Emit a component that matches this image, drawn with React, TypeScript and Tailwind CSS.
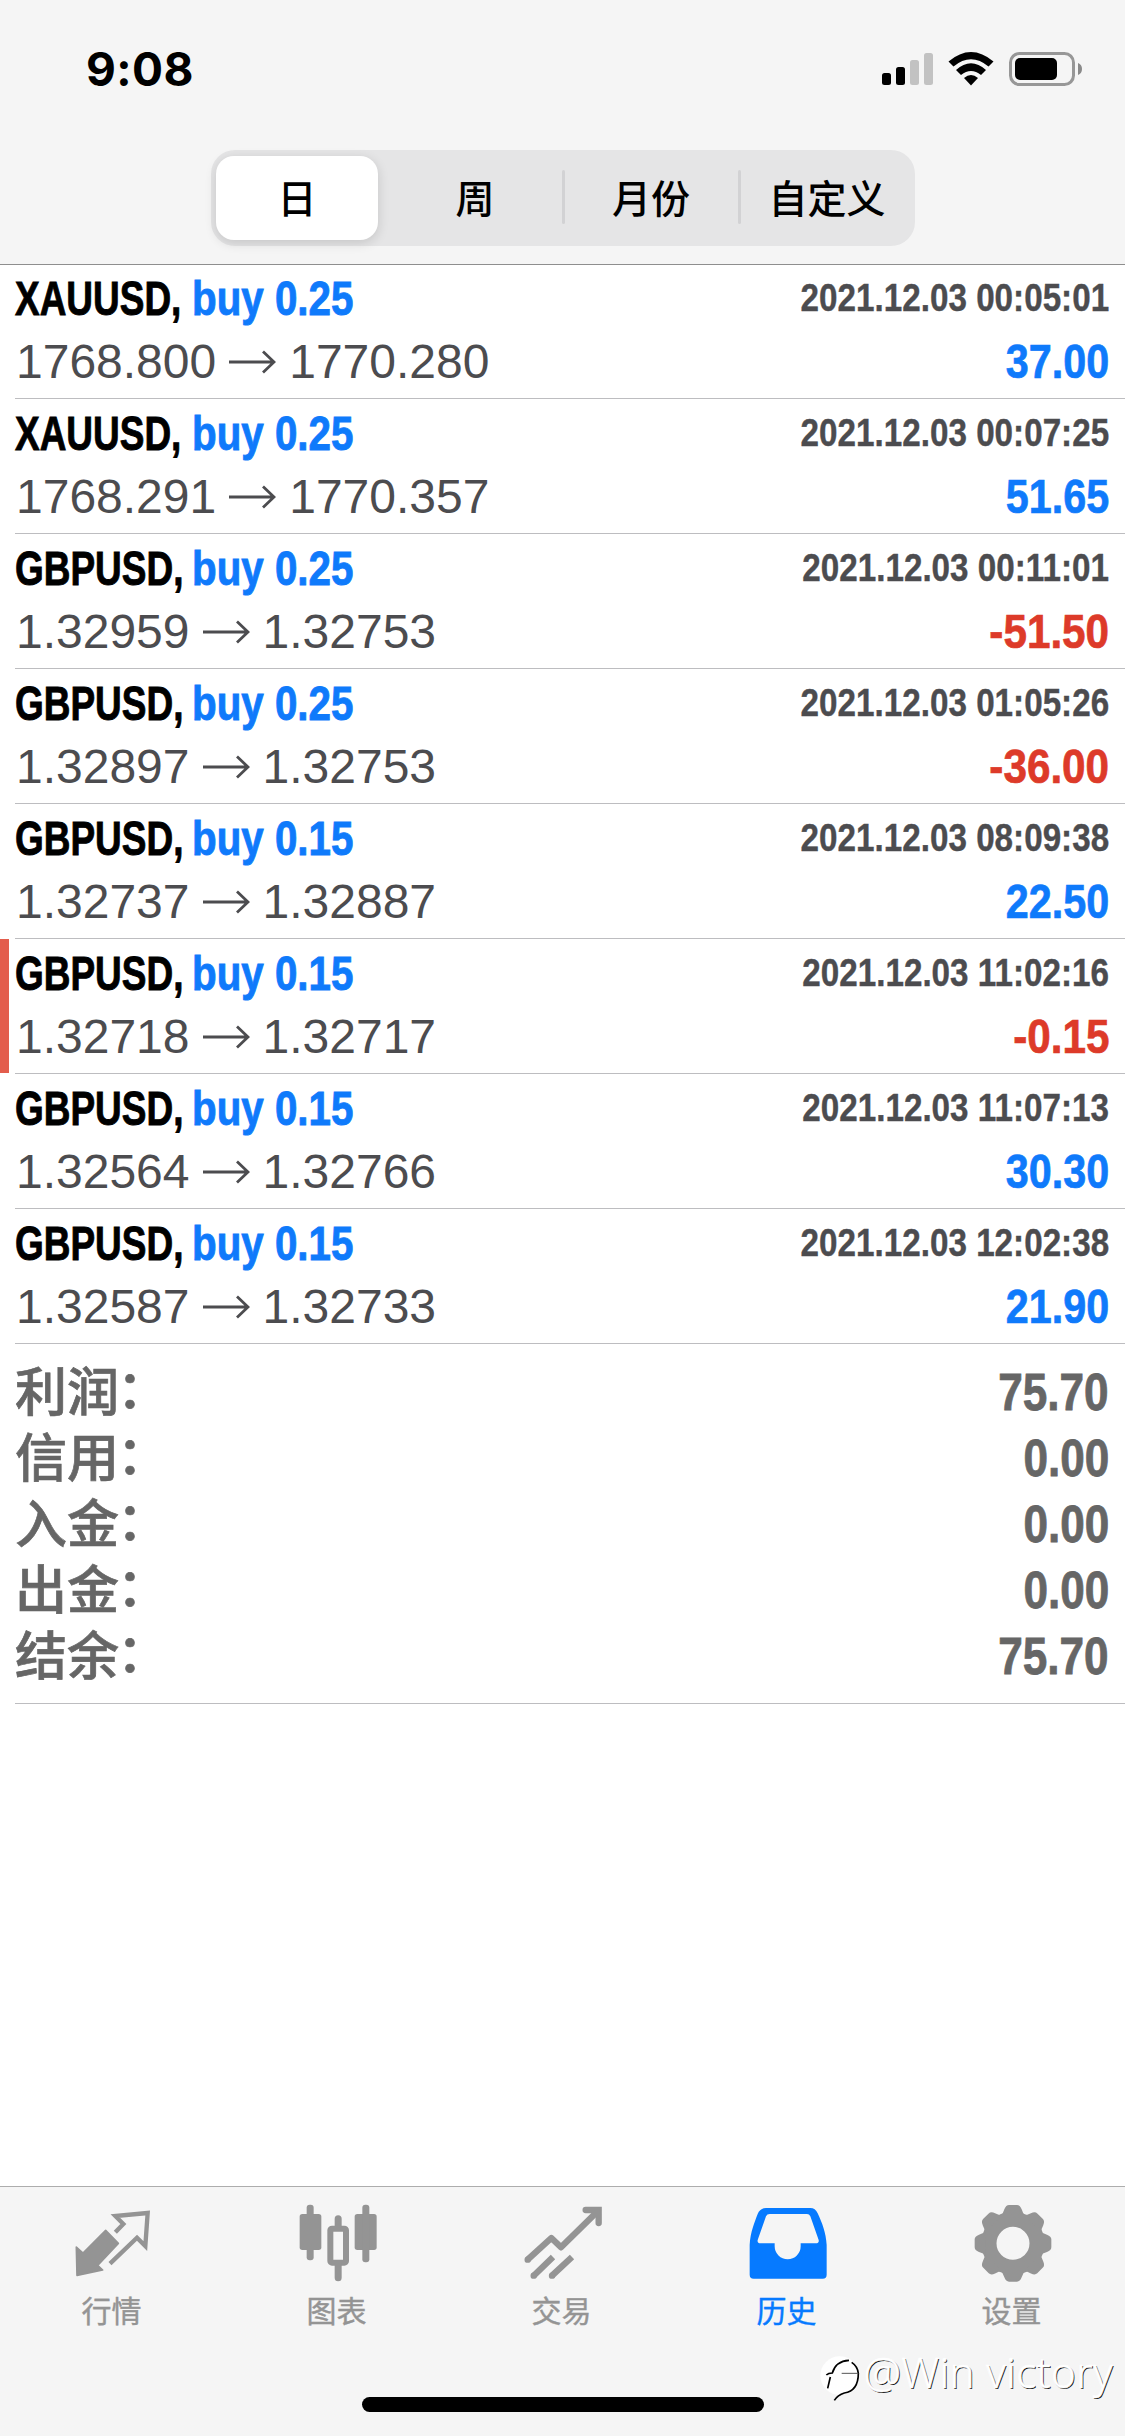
import type { ReactNode } from "react";

type Deal = {
  symbol: string;
  volume: string;
  open: string;
  close: string;
  time: string;
  profit: string;
  marked?: boolean;
};

const DEALS: Deal[] = [
  { symbol: "XAUUSD", volume: "0.25", open: "1768.800", close: "1770.280", time: "2021.12.03 00:05:01", profit: "37.00" },
  { symbol: "XAUUSD", volume: "0.25", open: "1768.291", close: "1770.357", time: "2021.12.03 00:07:25", profit: "51.65" },
  { symbol: "GBPUSD", volume: "0.25", open: "1.32959", close: "1.32753", time: "2021.12.03 00:11:01", profit: "-51.50" },
  { symbol: "GBPUSD", volume: "0.25", open: "1.32897", close: "1.32753", time: "2021.12.03 01:05:26", profit: "-36.00" },
  { symbol: "GBPUSD", volume: "0.15", open: "1.32737", close: "1.32887", time: "2021.12.03 08:09:38", profit: "22.50" },
  { symbol: "GBPUSD", volume: "0.15", open: "1.32718", close: "1.32717", time: "2021.12.03 11:02:16", profit: "-0.15", marked: true },
  { symbol: "GBPUSD", volume: "0.15", open: "1.32564", close: "1.32766", time: "2021.12.03 11:07:13", profit: "30.30" },
  { symbol: "GBPUSD", volume: "0.15", open: "1.32587", close: "1.32733", time: "2021.12.03 12:02:38", profit: "21.90" },
];

const SUMMARY = [
  { label: "利润", value: "75.70" },
  { label: "信用", value: "0.00" },
  { label: "入金", value: "0.00" },
  { label: "出金", value: "0.00" },
  { label: "结余", value: "75.70" },
];

const PERIODS = ["日", "周", "月份", "自定义"];

function StatusBar() {
  return (
    <div className="flex h-[150px] items-start justify-between pt-[40px] pr-[43px] pl-[86px]">
      <span className="font-['Inter',sans-serif] text-[46px] leading-[58px] font-bold tracking-[0.4px] text-black">9:08</span>
      <svg className="mt-[8px]" width="204" height="44" viewBox="878 48 204 44">
        <rect x="882" y="73" width="9" height="12" rx="2.5" />
        <rect x="896" y="67" width="9" height="18" rx="2.5" />
        <rect x="910" y="60" width="9" height="25" rx="2.5" fill="#c2c2c2" />
        <rect x="924" y="53" width="9" height="32" rx="2.5" fill="#c2c2c2" />
        <path d="M948.5 61.5Q971 42.500 993.500 61.500L988.500 66.500Q971 52 953.500 66.500Z" />
        <path d="M956 70Q971 56.500 986 70L981 75Q971 67 961 75Z" />
        <path d="M964 78Q971 72 978 78L971 85.500Z" />
        <rect x="1010.500" y="53.500" width="63" height="31" rx="9" fill="none" stroke="#979797" strokeWidth="3" />
        <rect x="1015" y="58" width="42" height="22" rx="5" />
        <path d="M1078 63Q1082 64.500 1082 69T1078 75Z" fill="#8a8a8a" />
      </svg>
    </div>
  );
}

function PeriodPicker() {
  return (
    <div className="mr-[210px] ml-[211px] grid h-[96px] grid-cols-4 items-center rounded-[24px] bg-[#e5e5e6]">
      {PERIODS.map((period, i) => (
        <div key={period} className="relative flex h-full items-center justify-center">
          {i > 1 && <span className="absolute top-[20px] -left-px h-[54px] w-[3px] rounded-full bg-[#d2d2d4]" />}
          <span
            className={
              i === 0
                ? "mr-[4px] flex h-[84px] w-[162px] items-center justify-center rounded-[18px] bg-white pb-[3px] text-[39px] leading-none font-medium shadow-[0_3px_12px_rgba(0,0,0,0.14)]"
                : "pb-[3px] text-[39px] leading-none font-medium"
            }
          >
            {period}
          </span>
        </div>
      ))}
    </div>
  );
}

function DealRow({ deal }: { deal: Deal }) {
  return (
    <li className="relative h-[135px] pl-[15px]">
      {deal.marked && <span className="absolute top-0 left-0 h-[134px] w-[9px] bg-[#e35d4d]" />}
      <div className="h-full border-b border-[#bdbdc0] pt-[10px] pr-[16px] font-['Liberation_Sans',sans-serif] whitespace-nowrap">
        <div className="flex h-[63px] justify-between">
          <div className="flex text-[48px] leading-[49px] font-bold [-webkit-text-stroke:0.9px_currentColor]">
            <span className="w-[177px]">
              <span className="inline-block origin-left scale-x-[0.77] text-black">{deal.symbol},</span>
            </span>
            <span className="inline-block origin-left scale-x-[0.84] text-[#0f7afb]">buy {deal.volume}</span>
          </div>
          <span className="mt-[3px] inline-block origin-right scale-x-[0.852] text-[39px] leading-[41px] font-bold text-[#4c4c4f] [-webkit-text-stroke:0.4px_currentColor]">
            {deal.time}
          </span>
        </div>
        <div className="flex justify-between text-[48px] leading-[49px]">
          <div className="flex items-center gap-[13px] pl-px text-[#4c4c4f]">
            <span>{deal.open}</span>
            <svg width="47" height="24" viewBox="0 0 47 24" fill="none" stroke="currentColor" strokeWidth="2.8">
              <path d="M0 12H45M34 1.500L45 12L34 22.500" />
            </svg>
            <span>{deal.close}</span>
          </div>
          <span
            className={`inline-block origin-right font-bold [-webkit-text-stroke:0.7px_currentColor] ${
              deal.profit.startsWith("-") ? "scale-x-[0.88] text-[#dd3a29]" : "scale-x-[0.86] text-[#0f7afb]"
            }`}
          >
            {deal.profit}
          </span>
        </div>
      </div>
    </li>
  );
}

function Summary() {
  return (
    <div className="ml-[15px] h-[360px] border-b border-[#bdbdc0] pt-[15px] pr-[16px] text-[#666666]">
      {SUMMARY.map((row) => (
        <div key={row.label} className="flex h-[66px] justify-between">
          <span className="text-[52px] leading-[60px] font-medium [-webkit-text-stroke:0.7px_currentColor]">
            {row.label}
            <span className="-ml-[15px] font-['Noto_Sans_CJK_JP',sans-serif]" lang="ja">
              ：
            </span>
          </span>
          <span className="inline-block origin-right scale-x-[0.865] pt-px font-['Liberation_Sans',sans-serif] text-[51px] leading-[66px] font-bold [-webkit-text-stroke:0.8px_currentColor]">
            {row.value}
          </span>
        </div>
      ))}
    </div>
  );
}

const QuotesIcon = () => (
  <svg width="80" height="80" viewBox="0 0 240 240">
    <path
      d="M10 135L30 153L98 85L136 124L74 190L89 204L12 220Z"
      fill="currentColor"
      stroke="currentColor"
      strokeWidth="5"
      strokeLinejoin="round"
    />
    <path d="M127 91L151 66L127 42L224 33L217 132L192 107L111 185" fill="none" stroke="currentColor" strokeWidth="13" />
  </svg>
);

const ChartIcon = () => (
  <svg width="80" height="80" viewBox="0 0 240 240" fill="currentColor">
    <rect x="5" y="36" width="65" height="108" rx="8" />
    <rect x="26" y="8" width="21" height="167" rx="9" />
    <rect x="97" y="80" width="47" height="102" rx="5" fill="none" stroke="currentColor" strokeWidth="18" />
    <path d="M110 80V50a10.500 10.500 0 0 1 21 0V80ZM110 185V227a10.500 10.500 0 0 0 21 0V185Z" />
    <rect x="170" y="36" width="66" height="108" rx="8" />
    <rect x="193" y="8" width="21" height="173" rx="9" />
  </svg>
);

const TradeIcon = () => (
  <svg width="80" height="80" viewBox="0 0 240 240" fill="none" stroke="currentColor" strokeWidth="19">
    <path d="M14 173L85 108L114 136L224 28M32 221L90 165M87 221L147 165" strokeLinejoin="round" />
    <path d="M188 24H227V63" strokeLinecap="round" />
    <path d="M14 173h.1M32 221h.1M87 221h.1" strokeLinecap="round" />
  </svg>
);

const HistoryIcon = () => (
  <svg width="80" height="80" viewBox="0 0 240 240" fill="currentColor" fillRule="evenodd">
    <path d="M5 129C7 90 20 60 29 36Q36 18 54 18H187Q202 18 209 34C222 62 234 92 236 129V218Q236 230 224 230H17Q5 230 5 218ZM65 36Q57 36 54 43L29 114Q27 124 38 124H80V133A39 39 0 0 0 158 133V124H203Q214 124 212 114L187 43Q184 36 177 36Z" />
  </svg>
);

const TEETH = [0, 45, 90, 135, 180, 225, 270, 315];

const SettingsIcon = () => (
  <svg width="80" height="80" viewBox="0 0 240 240" fill="currentColor">
    <circle cx="120" cy="124" r="72" fill="none" stroke="currentColor" strokeWidth="45" />
    {TEETH.map((angle) => (
      <path key={angle} d="M83 42Q90 36 94 22Q99 9 108 9H132Q141 9 146 22Q150 36 157 42Z" transform={`rotate(${angle} 120 124)`} />
    ))}
  </svg>
);

const TABS: { label: string; icon: ReactNode; active?: boolean }[] = [
  { label: "行情", icon: <QuotesIcon /> },
  { label: "图表", icon: <ChartIcon /> },
  { label: "交易", icon: <TradeIcon /> },
  { label: "历史", icon: <HistoryIcon />, active: true },
  { label: "设置", icon: <SettingsIcon /> },
];

function TabBar() {
  return (
    <nav className="relative flex h-[250px] flex-col border-t border-[#adadad] bg-[#f5f5f5]">
      <div className="grid grid-cols-5 pt-[15px]">
        {TABS.map((tab) => (
          <div
            key={tab.label}
            className={`flex flex-col items-center gap-[12px] ${tab.active ? "text-[#067aff]" : "text-[#949494]"}`}
          >
            {tab.icon}
            <span className="pr-[2px] text-[30px] leading-[30px] [-webkit-text-stroke:0.4px_currentColor]">{tab.label}</span>
          </div>
        ))}
      </div>
      <div className="mt-auto mb-[24px] ml-[362px] h-[15px] w-[402px] rounded-full bg-black" />
      <Watermark />
    </nav>
  );
}

function Watermark() {
  return (
    <div className="absolute top-[158px] right-[12px] flex items-start">
      <svg className="mt-[10px] mr-px" width="44" height="48" viewBox="0 0 132 144">
        <circle cx="62" cy="62" r="58" fill="white" />
        <path
          d="M22 60Q28 54 40 54Q50 18 90 16M34 66L26 100M98 22Q116 34 118 55Q118 108 76 114Q56 120 46 136"
          fill="none"
          stroke="black"
          strokeWidth="5"
        />
        <path d="M68 55H118" stroke="#555" strokeWidth="3" />
      </svg>
      <span className="font-['Noto_Sans',sans-serif] text-[42px] leading-[54px] font-light tracking-[0.3px] whitespace-nowrap text-white [-webkit-text-stroke:0.5px_white] [text-shadow:1px_1px_0_#111]">
        @Win victory
      </span>
    </div>
  );
}

export default function App() {
  return (
    <div className="flex h-[2436px] w-[1125px] flex-col overflow-hidden bg-white font-['Noto_Sans_CJK_SC',sans-serif] text-black">
      <header className="h-[265px] border-b border-[#8e8e8e] bg-[#f5f5f5]">
        <StatusBar />
        <PeriodPicker />
      </header>
      {/* first row starts under the header's hairline */}
      <main className="relative z-0 -mt-px flex-1">
        <ul>
          {DEALS.map((deal) => (
            <DealRow key={deal.time} deal={deal} />
          ))}
        </ul>
        <Summary />
      </main>
      <TabBar />
    </div>
  );
}
